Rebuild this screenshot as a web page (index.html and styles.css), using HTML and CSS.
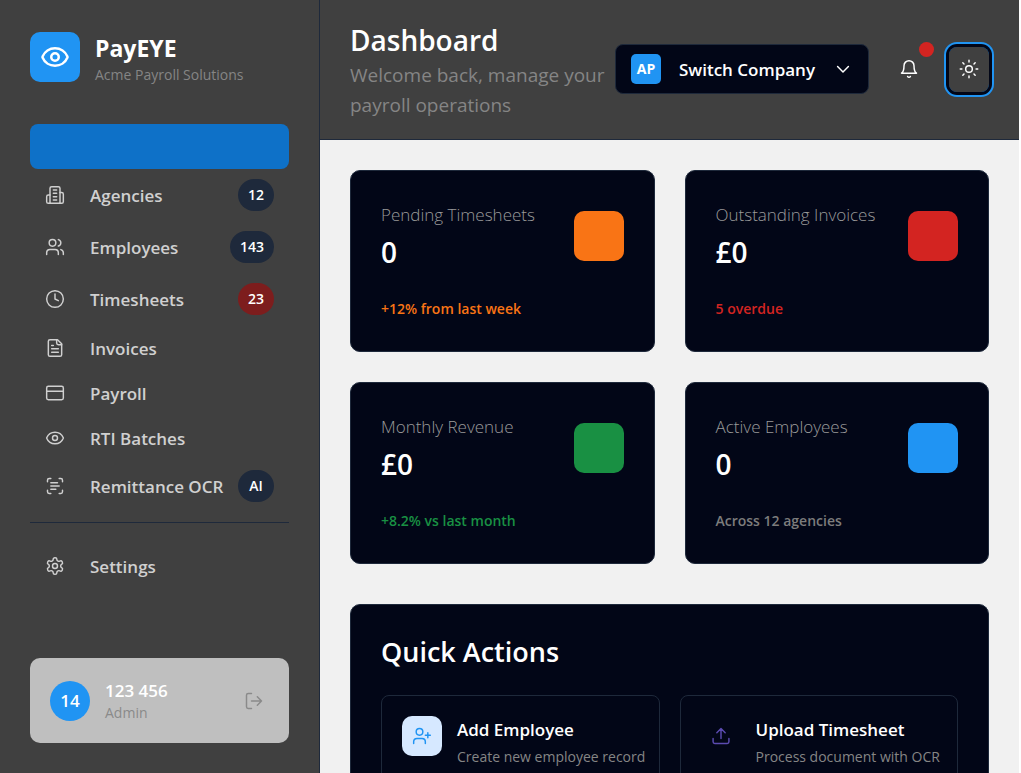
FILE: index.html
```html
<!DOCTYPE html>
<html lang="en">
<head>
<meta charset="utf-8">
<meta name="viewport" content="width=device-width, initial-scale=1">
<title>PayEYE Dashboard</title>
<link rel="stylesheet" href="styles.css">
</head>
<body>
<svg class="sprite" aria-hidden="true">
  <symbol id="eye" viewBox="0 0 24 24"><path d="M2.06 12.35a1 1 0 0 1 0-.7 10.75 10.75 0 0 1 19.88 0 1 1 0 0 1 0 .7 10.75 10.75 0 0 1-19.88 0"/><circle cx="12" cy="12" r="3"/></symbol>
</svg>
<div class="app">
  <aside class="sidebar">
    <div class="brand">
      <span class="brand-logo"><svg class="icon icon-lg"><use href="#eye"/></svg></span>
      <div class="brand-text">
        <div class="brand-name">PayEYE</div>
        <div class="brand-company">Acme Payroll Solutions</div>
      </div>
    </div>
    <nav class="nav" aria-label="Main">
      <a class="nav-item active" href="#" aria-label="Dashboard" aria-current="page"></a>
      <a class="nav-item" href="#"><svg class="icon" viewBox="0 0 24 24"><path d="M6 22V4a2 2 0 0 1 2-2h8a2 2 0 0 1 2 2v18Z"/><path d="M6 12H4a2 2 0 0 0-2 2v6a2 2 0 0 0 2 2h2"/><path d="M18 9h2a2 2 0 0 1 2 2v9a2 2 0 0 1-2 2h-2"/><path d="M10 6h4M10 10h4M10 14h4M10 18h4"/></svg><span class="nav-label">Agencies</span><span class="badge">12</span></a>
      <a class="nav-item" href="#"><svg class="icon" viewBox="0 0 24 24"><path d="M16 21v-2a4 4 0 0 0-4-4H6a4 4 0 0 0-4 4v2"/><circle cx="9" cy="7" r="4"/><path d="M22 21v-2a4 4 0 0 0-3-3.87"/><path d="M16 3.13a4 4 0 0 1 0 7.75"/></svg><span class="nav-label">Employees</span><span class="badge">143</span></a>
      <a class="nav-item" href="#"><svg class="icon" viewBox="0 0 24 24"><circle cx="12" cy="12" r="10"/><path d="M12 6v6l4 2"/></svg><span class="nav-label">Timesheets</span><span class="badge badge-alert">23</span></a>
      <a class="nav-item" href="#"><svg class="icon" viewBox="0 0 24 24"><path d="M15 2H6a2 2 0 0 0-2 2v16a2 2 0 0 0 2 2h12a2 2 0 0 0 2-2V7Z"/><path d="M14 2v4a2 2 0 0 0 2 2h4"/><path d="M10 9H8M16 13H8M16 17H8"/></svg><span class="nav-label">Invoices</span></a>
      <a class="nav-item" href="#"><svg class="icon" viewBox="0 0 24 24"><rect x="2" y="4" width="20" height="16" rx="2"/><path d="M2 10h20"/></svg><span class="nav-label">Payroll</span></a>
      <a class="nav-item" href="#"><svg class="icon"><use href="#eye"/></svg><span class="nav-label">RTI Batches</span></a>
      <a class="nav-item" href="#"><svg class="icon" viewBox="0 0 24 24"><path d="M3 7V5a2 2 0 0 1 2-2h2M17 3h2a2 2 0 0 1 2 2v2M21 17v2a2 2 0 0 1-2 2h-2M7 21H5a2 2 0 0 1-2-2v-2M7 8h8M7 12h10M7 16h6"/></svg><span class="nav-label">Remittance OCR</span><span class="badge">AI</span></a>
      <hr class="nav-divider">
      <a class="nav-item" href="#"><svg class="icon" viewBox="0 0 24 24"><path d="M12.22 2h-.44a2 2 0 0 0-2 2v.18a2 2 0 0 1-1 1.73l-.43.25a2 2 0 0 1-2 0l-.15-.08a2 2 0 0 0-2.73.73l-.22.38a2 2 0 0 0 .73 2.73l.15.1a2 2 0 0 1 1 1.72v.51a2 2 0 0 1-1 1.74l-.15.09a2 2 0 0 0-.73 2.73l.22.38a2 2 0 0 0 2.73.73l.15-.08a2 2 0 0 1 2 0l.43.25a2 2 0 0 1 1 1.73V20a2 2 0 0 0 2 2h.44a2 2 0 0 0 2-2v-.18a2 2 0 0 1 1-1.73l.43-.25a2 2 0 0 1 2 0l.15.08a2 2 0 0 0 2.73-.73l.22-.39a2 2 0 0 0-.73-2.73l-.15-.08a2 2 0 0 1-1-1.74v-.5a2 2 0 0 1 1-1.74l.15-.09a2 2 0 0 0 .73-2.73l-.22-.38a2 2 0 0 0-2.73-.73l-.15.08a2 2 0 0 1-2 0l-.43-.25a2 2 0 0 1-1-1.73V4a2 2 0 0 0-2-2z"/><circle cx="12" cy="12" r="3"/></svg><span class="nav-label">Settings</span></a>
    </nav>
    <div class="user">
      <span class="user-avatar">14</span>
      <div class="user-text">
        <div class="user-name">123 456</div>
        <div class="user-role">Admin</div>
      </div>
      <button class="logout" type="button" aria-label="Log out"><svg class="icon" viewBox="0 0 24 24"><path d="M9 21H5a2 2 0 0 1-2-2V5a2 2 0 0 1 2-2h4M16 17l5-5-5-5M21 12H9"/></svg></button>
    </div>
  </aside>

  <div class="content">
    <header class="header">
      <div class="heading">
        <h1>Dashboard</h1>
        <p>Welcome back, manage your payroll operations</p>
      </div>
      <div class="tools">
        <button class="company" type="button">
          <span class="company-mark">AP</span>
          <span class="company-label">Switch Company</span>
          <svg class="icon" viewBox="0 0 24 24"><path d="m5.500 9 6.500 6.500L18.500 9"/></svg>
        </button>
        <button class="tool" type="button" aria-label="Notifications"><svg class="icon" viewBox="0 0 24 24"><path d="M18 8A6 6 0 0 0 6 8c0 7-3 9-3 9h18s-3-2-3-9"/><path d="M10.3 21a1.94 1.94 0 0 0 3.4 0"/></svg><span class="dot"></span></button>
        <button class="tool tool-focus" type="button" aria-label="Toggle theme"><svg class="icon" viewBox="0 0 24 24"><circle cx="12" cy="12" r="4"/><path d="M12 1.500v2M12 20.500v2M4.600 4.600l1.400 1.400M18 18l1.400 1.400M1.500 12h2M20.500 12h2M6 18l-1.400 1.400M19.400 4.600 18 6"/></svg></button>
      </div>
    </header>
    <main class="main">
      <section class="stats" aria-label="Summary">
        <article class="card stat">
          <div class="stat-top"><div><div class="stat-label">Pending Timesheets</div><div class="stat-value">0</div></div><span class="tile orange"></span></div>
          <div class="stat-note text-orange">+12% from last week</div>
        </article>
        <article class="card stat">
          <div class="stat-top"><div><div class="stat-label">Outstanding Invoices</div><div class="stat-value">£0</div></div><span class="tile red"></span></div>
          <div class="stat-note text-red">5 overdue</div>
        </article>
        <article class="card stat">
          <div class="stat-top"><div><div class="stat-label">Monthly Revenue</div><div class="stat-value">£0</div></div><span class="tile green"></span></div>
          <div class="stat-note text-green">+8.2% vs last month</div>
        </article>
        <article class="card stat">
          <div class="stat-top"><div><div class="stat-label">Active Employees</div><div class="stat-value">0</div></div><span class="tile blue"></span></div>
          <div class="stat-note">Across 12 agencies</div>
        </article>
      </section>
      <section class="card quick">
        <h2>Quick Actions</h2>
        <div class="actions">
          <button class="action" type="button">
            <span class="action-icon action-icon-blue"><svg class="icon" viewBox="0 0 24 24"><path d="M16 21v-2a4 4 0 0 0-4-4H6a4 4 0 0 0-4 4v2"/><circle cx="9" cy="7" r="4"/><path d="M19 8v6M22 11h-6"/></svg></span>
            <span class="action-text"><span class="action-title">Add Employee</span><span class="action-sub">Create new employee record</span></span>
          </button>
          <button class="action" type="button">
            <span class="action-icon action-icon-violet"><svg class="icon" viewBox="0 0 24 24"><path d="M2.500 15v4a2 2 0 0 0 2 2h15a2 2 0 0 0 2-2v-4M17 8l-5-5-5 5M12 3v12"/></svg></span>
            <span class="action-text"><span class="action-title">Upload Timesheet</span><span class="action-sub">Process document with OCR</span></span>
          </button>
        </div>
      </section>
    </main>
  </div>
</div>
</body>
</html>
```

FILE: styles.css
```css
:root {
  --panel: #404040;
  --card: #020617;
  --line: #1e293b;
  --blue: #2094f3;
  --red: #d32421;
  --orange: #f97415;
  --green: #199043;
  --muted: #858585;
}
* { box-sizing: border-box; }
body {
  margin: 0;
  background: #fff;
  color: #fff;
  font-family: "Open Sans", "Noto Sans", sans-serif;
}
button { font: inherit; color: inherit; cursor: pointer; }
h1, h2, p { margin: 0; }
.sprite { position: absolute; width: 0; height: 0; }
.icon {
  width: 20px;
  height: 20px;
  flex: none;
  fill: none;
  stroke: currentColor;
  stroke-width: 1.75;
  stroke-linecap: round;
  stroke-linejoin: round;
}
.icon-lg { width: 30px; height: 30px; stroke-width: 2; }

.app {
  display: flex;
  height: 100vh;
  margin-right: 2px;
  overflow: hidden;
  background: #f1f1f1;
}

.sidebar {
  flex: none;
  width: 320px;
  padding: 30px;
  display: flex;
  flex-direction: column;
  background: var(--panel);
  border-right: 1px solid var(--line);
}
.brand { display: flex; align-items: center; gap: 15px; padding-bottom: 40px; }
.brand-logo {
  display: grid;
  place-items: center;
  width: 50px;
  height: 50px;
  border-radius: 10px;
  background: var(--blue);
}
.brand-text { padding-top: 4px; }
.brand-name { margin-bottom: 4px; font-size: 23px; font-weight: 700; line-height: 28px; }
.brand-company { font-size: 14px; line-height: 18px; color: var(--muted); white-space: nowrap; }

.nav { display: flex; flex-direction: column; }
.nav-item {
  display: flex;
  align-items: center;
  gap: 25px;
  min-height: 45px;
  padding: 10px 15px;
  border-radius: 8px;
  color: #d0d0d0;
  font-size: 17px;
  font-weight: 600;
  line-height: 22px;
  text-decoration: none;
  white-space: nowrap;
}
.nav-item.active { background: #0e71c8; }
.nav-label { flex: 1; min-width: 0; padding-top: 2px; }
.badge {
  flex: none;
  min-width: 36px;
  height: 32px;
  margin-left: -25px;
  padding: 0 10px;
  border-radius: 16px;
  background: var(--line);
  color: #fff;
  font-size: 14px;
  font-weight: 600;
  line-height: 32px;
  text-align: center;
}
.badge-alert { background: #7d1d1d; }
.nav-divider { width: 100%; margin: 10px 0 20px; border: 0; border-top: 1px solid var(--line); }

.user {
  display: flex;
  align-items: center;
  gap: 15px;
  min-height: 85px;
  margin-top: auto;
  padding: 20px;
  border-radius: 10px;
  background: #bfbfbf;
}
.user-avatar {
  flex: none;
  width: 40px;
  height: 40px;
  border-radius: 50%;
  background: var(--blue);
  font-size: 17px;
  font-weight: 600;
  line-height: 40px;
  text-align: center;
}
.user-text { flex: 1; padding-top: 2px; }
.user-name { font-size: 17px; font-weight: 600; line-height: 22px; }
.user-role { font-size: 14px; line-height: 21px; color: #8a8a8a; }
.logout { display: grid; padding: 5px; border: 0; background: none; color: #8a8a8a; }

.content { flex: 1; min-width: 0; display: flex; flex-direction: column; }
.header {
  flex: none;
  display: flex;
  align-items: center;
  justify-content: space-between;
  padding: 20px 30px 19px;
  background: var(--panel);
  border-bottom: 1px solid var(--line);
}
.heading { flex: 1; min-width: 0; }
h1 { font-size: 28px; font-weight: 600; line-height: 40px; }
.heading p { font-size: 19px; line-height: 30px; color: var(--muted); }
.tools { flex: none; display: flex; align-items: center; gap: 20px; padding-bottom: 2px; }
.company {
  display: flex;
  align-items: center;
  gap: 18px;
  height: 50px;
  padding: 0 15px;
  border: 1px solid var(--line);
  border-radius: 8px;
  background: var(--card);
  font-size: 17px;
  font-weight: 600;
  white-space: nowrap;
}
.company-mark {
  width: 30px;
  height: 30px;
  border-radius: 5px;
  background: var(--blue);
  font-size: 14px;
  font-weight: 700;
  line-height: 30px;
}
.tool {
  position: relative;
  display: grid;
  place-items: center;
  width: 40px;
  height: 45px;
  padding: 0;
  border: 0;
  border-radius: 8px;
  background: none;
}
.tool-focus { box-shadow: 0 0 0 3px var(--card), 0 0 0 5px var(--blue); }
.dot {
  position: absolute;
  top: -5px;
  right: -5px;
  width: 15px;
  height: 15px;
  border-radius: 50%;
  background: var(--red);
}

.main { flex: 1; min-height: 0; padding: 30px; overflow-y: auto; scrollbar-width: none; }
.card { border: 1px solid var(--line); border-radius: 10px; background: var(--card); padding: 30px; }
.stats { display: grid; grid-template-columns: 1fr 1fr; gap: 30px; margin-bottom: 40px; }
.stat-top { display: flex; align-items: center; justify-content: space-between; height: 70px; }
.stat-label { font-size: 17px; font-weight: 300; line-height: 28px; color: #9a9a9a; white-space: nowrap; }
.stat-value { margin-top: 4px; font-size: 28px; font-weight: 600; line-height: 38px; }
.stat-note { margin-top: 25px; font-size: 14px; font-weight: 600; line-height: 25px; color: #7c7c7c; }
.tile { flex: none; width: 50px; height: 50px; border-radius: 10px; }
.orange { background: var(--orange); }
.red { background: var(--red); }
.green { background: var(--green); }
.blue { background: var(--blue); }
.stat-note.text-orange { color: var(--orange); }
.stat-note.text-red { color: var(--red); }
.stat-note.text-green { color: var(--green); }

h2 { margin-bottom: 26px; font-size: 27px; font-weight: 600; line-height: 34px; }
.actions { display: grid; grid-template-columns: minmax(0, 1fr) minmax(0, 1fr); gap: 20px; }
.action {
  display: flex;
  align-items: flex-start;
  gap: 15px;
  padding: 20px;
  border: 1px solid var(--line);
  border-radius: 8px;
  background: none;
  text-align: left;
  white-space: nowrap;
}
.action-icon { flex: none; display: grid; place-items: center; width: 40px; height: 40px; border-radius: 10px; }
.action-icon-blue { background: #d6e8ff; color: var(--blue); }
.action-icon-violet { color: #5b4bb0; }
.action-text { display: flex; flex-direction: column; }
.action-title { font-size: 17px; font-weight: 600; line-height: 28px; }
.action-sub { font-size: 14px; line-height: 25px; color: var(--muted); }
```
